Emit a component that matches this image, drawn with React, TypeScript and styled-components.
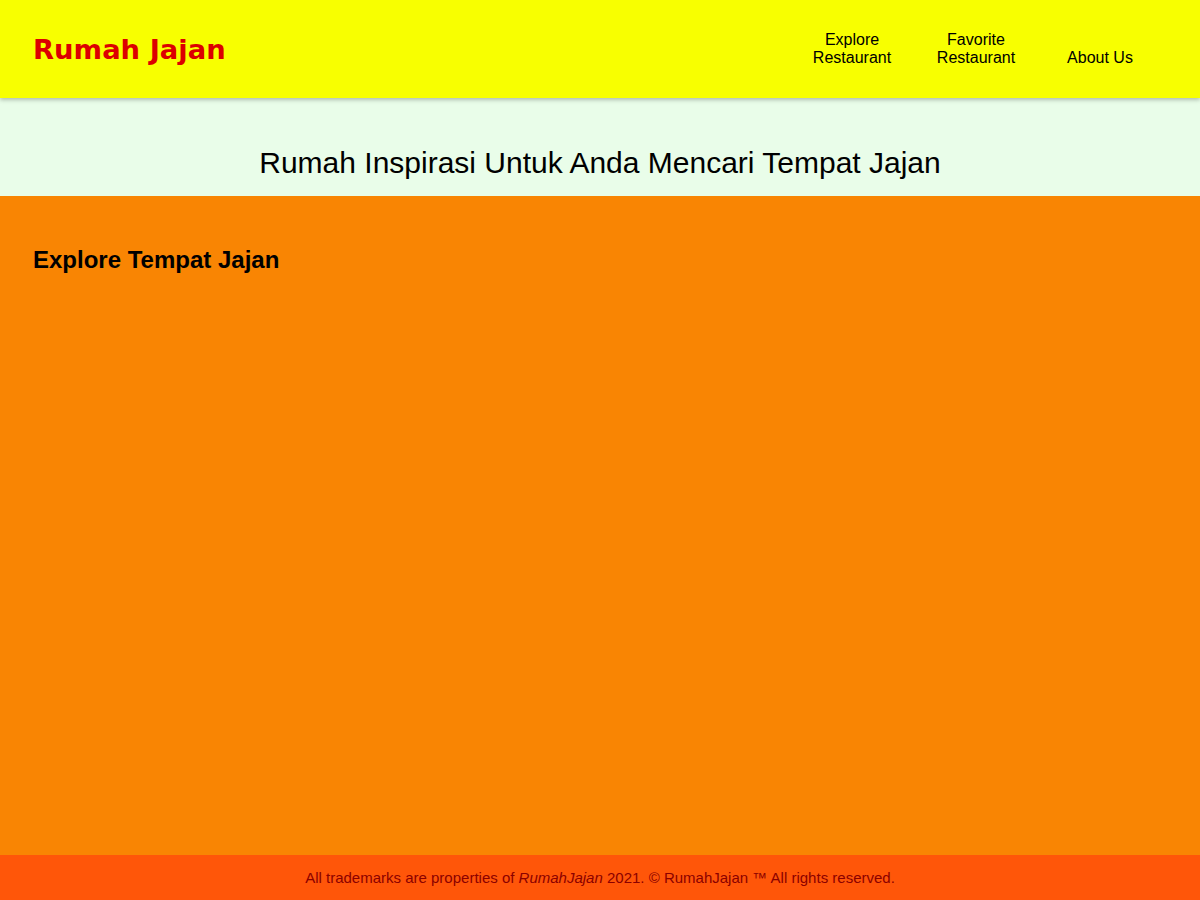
import React from "react";
import styled, { createGlobalStyle } from "styled-components";

const Global = createGlobalStyle`
  html, body { margin: 0; padding: 0; }
  body { font-family: "Liberation Sans", Arial, sans-serif; }
  * { box-sizing: border-box; }
`;

const Page = styled.div`
  display: flex;
  flex-direction: column;
  min-height: 900px;
`;

const Header = styled.header`
  height: 98px;
  background: #f8ff00;
  display: flex;
  align-items: center;
  justify-content: space-between;
  padding: 0 38px 0 33px;
  box-shadow: 0 2px 4px rgba(0, 0, 0, 0.25);
  position: relative;
  z-index: 1;
`;

const Logo = styled.h1`
  margin: 0;
  font-family: "DejaVu Sans", sans-serif;
  font-weight: bold;
  font-size: 27.4px;
  color: #dc0000;
`;

const Nav = styled.nav`
  display: flex;
  align-items: flex-end;
`;

const NavLink = styled.a`
  width: 124px;
  text-align: center;
  font-size: 16px;
  line-height: 18px;
  color: #000;
  text-decoration: none;
`;

const Hero = styled.section`
  height: 98px;
  background: #e9fde9;
  display: flex;
  align-items: flex-end;
  justify-content: center;
  padding-bottom: 16px;
`;

const HeroTitle = styled.h2`
  margin: 0;
  font-weight: normal;
  font-size: 30px;
  color: #000;
`;

const Main = styled.main`
  flex: 1;
  background: #f98503;
  padding: 50px 33px;
`;

const SectionTitle = styled.h3`
  margin: 0;
  font-size: 24px;
  font-weight: bold;
  color: #000;
`;

const Footer = styled.footer`
  height: 45px;
  background: #ff5609;
  display: flex;
  align-items: center;
  justify-content: center;
  font-size: 15px;
  color: #8b0000;
`;

export default function App() {
  return (
    <Page>
      <Global />
      <Header>
        <Logo>Rumah Jajan</Logo>
        <Nav>
          <NavLink href="#">Explore<br />Restaurant</NavLink>
          <NavLink href="#">Favorite<br />Restaurant</NavLink>
          <NavLink href="#">About Us</NavLink>
        </Nav>
      </Header>
      <Hero>
        <HeroTitle>Rumah Inspirasi Untuk Anda Mencari Tempat Jajan</HeroTitle>
      </Hero>
      <Main>
        <SectionTitle>Explore Tempat Jajan</SectionTitle>
      </Main>
      <Footer>
        <span>
          All trademarks are properties of <i>RumahJajan</i> 2021. © RumahJajan ™ All rights reserved.
        </span>
      </Footer>
    </Page>
  );
}
